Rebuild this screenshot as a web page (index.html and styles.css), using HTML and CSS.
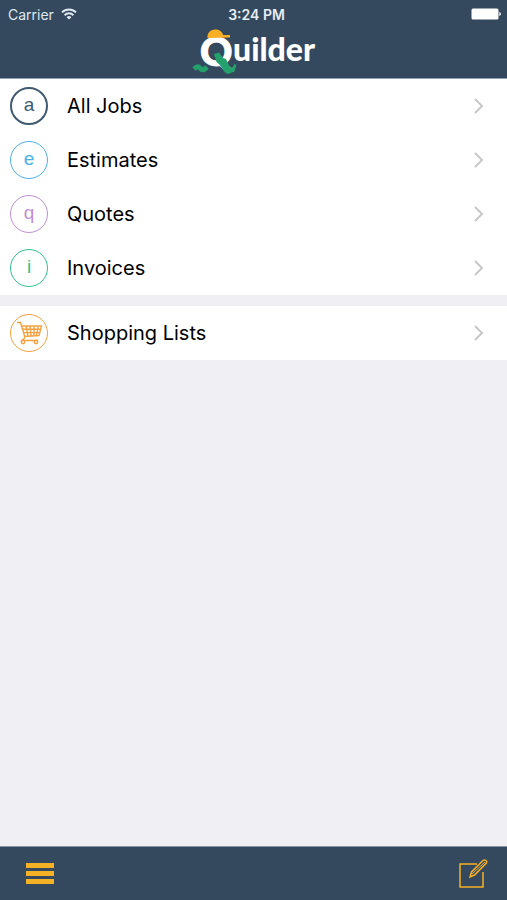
FILE: index.html
```html
<!DOCTYPE html>
<html lang="en">
<head>
    <meta charset="UTF-8">
    <meta name="viewport" content="width=device-width, initial-scale=1.0">
    <title>Quilder</title>
    <link rel="stylesheet" href="styles.css">
</head>
<body>
    <header class="header">
        <div class="status-bar">
            <span class="carrier">
                Carrier
                <svg width="16" height="12" viewBox="0 0 16 12" fill="none" stroke="currentColor" stroke-width="2">
                    <path d="M1 4.400a10 10 0 0 1 14 0M3.600 7.200a6.200 6.200 0 0 1 8.800 0"/>
                    <path d="M8 11.600 5.600 9.200a3.400 3.400 0 0 1 4.800 0z" fill="currentColor" stroke="none"/>
                </svg>
            </span>
            <span class="time">3:24 PM</span>
            <span class="battery">
                <svg width="30" height="12" viewBox="0 0 30 12" fill="currentColor">
                    <rect x="0.500" y="0.500" width="27" height="11" rx="1.500"/>
                    <path d="M28.300 4c2 .3 2 3.700 0 4z"/>
                </svg>
            </span>
        </div>
        <h1 class="logo">
            <svg width="124" height="48" viewBox="0 0 124 48" role="img" aria-label="Quilder">
                <text class="logo-q" x="8" y="38">Q</text>
                <text class="logo-name" x="41" y="33">uilder</text>
                <path d="M15.500 10c-.5-5 3-8.500 7.500-8.500 4 0 7.500 2 8 5.500h7v2.500z" fill="#f9af23"/>
                <path d="M22 26l5-1.500 4 5.500 3 1 4 8.500 3-.5 1-3 2.500 1-2 6.500-6.500 2.500-3-1.500-5-7.500-3.500-3z" fill="#23a06b"/>
                <path d="M2 41c4-4 5-2 7 0s4 0 6-2" stroke="#23a06b" stroke-width="5" fill="none"/>
            </svg>
        </h1>
    </header>

    <main class="content">
        <nav class="menu">
            <a href="#jobs" class="menu-item">
                <span class="badge jobs">a</span>
                <span class="label">All Jobs</span>
                <svg class="chevron" width="12" height="16" viewBox="0 0 12 16"><path d="M2 1l7 7-7 7"/></svg>
            </a>
            <a href="#estimates" class="menu-item">
                <span class="badge estimates">e</span>
                <span class="label">Estimates</span>
                <svg class="chevron" width="12" height="16" viewBox="0 0 12 16"><path d="M2 1l7 7-7 7"/></svg>
            </a>
            <a href="#quotes" class="menu-item">
                <span class="badge quotes">q</span>
                <span class="label">Quotes</span>
                <svg class="chevron" width="12" height="16" viewBox="0 0 12 16"><path d="M2 1l7 7-7 7"/></svg>
            </a>
            <a href="#invoices" class="menu-item">
                <span class="badge invoices">i</span>
                <span class="label">Invoices</span>
                <svg class="chevron" width="12" height="16" viewBox="0 0 12 16"><path d="M2 1l7 7-7 7"/></svg>
            </a>
        </nav>

        <nav class="menu">
            <a href="#shopping" class="menu-item">
                <span class="badge shopping">
                    <svg width="27" height="24" viewBox="0 0 27 24" fill="none" stroke="currentColor" stroke-width="1.400">
                        <path d="M1 1.500h3.500L9 16.500M5.500 5h20L23 14.500 8.500 15.500"/>
                        <path d="M6.500 8.200h18M7.500 11.600h16.500M10 5l2 10M14 5l1 10M18 5v10M22 5l-1.500 10"/>
                        <path d="M9 16.500l-3 3h16"/>
                        <circle cx="7" cy="21" r="1.700"/>
                        <circle cx="20" cy="21" r="1.700"/>
                    </svg>
                </span>
                <span class="label">Shopping Lists</span>
                <svg class="chevron" width="12" height="16" viewBox="0 0 12 16"><path d="M2 1l7 7-7 7"/></svg>
            </a>
        </nav>
    </main>

    <footer class="toolbar">
        <button type="button" class="icon-button" aria-label="Menu">
            <svg width="28" height="22" viewBox="0 0 28 22" fill="currentColor">
                <path d="M0 0h28v5H0zM0 8h28v5H0zM0 16h28v5H0z"/>
            </svg>
        </button>
        <button type="button" class="icon-button" aria-label="New job">
            <svg width="30" height="30" viewBox="0 0 30 30" fill="none" stroke="currentColor" stroke-width="1.500">
                <path d="M19 5H2v23h23V13"/>
                <path d="M12 18l1.500-5L25 1.500q1.500-1 3 0t0 3L16.500 16z"/>
                <path d="M14 15L27 3" stroke-width="1"/>
            </svg>
        </button>
    </footer>
</body>
</html>
```
FILE: styles.css
```css
* {
    margin: 0;
    padding: 0;
    box-sizing: border-box;
}

body {
    font-family: 'Inter', sans-serif;
    background: #efeff4;
    color: #000;
    min-height: 100vh;
    display: flex;
    flex-direction: column;
}

svg {
    display: block;
}

.header {
    background: #34495e;
    color: white;
    border-bottom: 1px solid #8fa3b5;
}

.status-bar {
    display: grid;
    grid-template-columns: 1fr auto 1fr;
    align-items: center;
    height: 28px;
    padding: 0 6px 0 8px;
    font-size: 14px;
}

.carrier {
    display: flex;
    align-items: center;
    gap: 7px;
    color: #dfe8f0;
}

.time {
    padding-left: 4px;
    font-size: 14px;
    font-weight: 600;
    color: #e6edf3;
}

.battery {
    justify-self: end;
}

.logo {
    display: flex;
    justify-content: center;
    height: 50px;
}

.logo svg {
    overflow: visible;
}

.logo text {
    font-family: 'Lato', sans-serif;
    font-weight: 900;
    fill: white;
}

.logo-q {
    font-size: 40px;
    stroke: white;
    stroke-width: 1;
}

.logo-name {
    font-size: 32px;
}

.content {
    flex: 1;
}

.menu {
    background: white;
    margin-bottom: 11px;
}

.menu-item {
    display: flex;
    align-items: center;
    height: 54px;
    padding: 0 22px 0 10px;
    color: inherit;
    text-decoration: none;
}

.badge {
    display: flex;
    align-items: center;
    justify-content: center;
    width: 38px;
    height: 38px;
    margin-right: 19px;
    border: 1px solid;
    border-radius: 50%;
    font-family: 'Liberation Sans', sans-serif;
    font-size: 19px;
    line-height: 34px;
    padding-bottom: 2px;
}

.jobs {
    color: #3f5a70;
    border-width: 2px;
}

.estimates {
    color: #4db1ea;
}

.quotes {
    color: #c08fd0;
}

.invoices {
    color: #2fbf8f;
}

.shopping {
    color: #f5a142;
    padding-bottom: 0;
}

.label {
    flex: 1;
    font-size: 20px;
}

.chevron {
    fill: none;
    stroke: #c7c7cc;
    stroke-width: 2;
}

.toolbar {
    display: flex;
    align-items: center;
    justify-content: space-between;
    height: 54px;
    padding: 0 19px 0 26px;
    background: #34495e;
    border-top: 1px solid #8795a3;
}

.icon-button {
    background: none;
    border: none;
    color: #f5b125;
    cursor: pointer;
}
```
